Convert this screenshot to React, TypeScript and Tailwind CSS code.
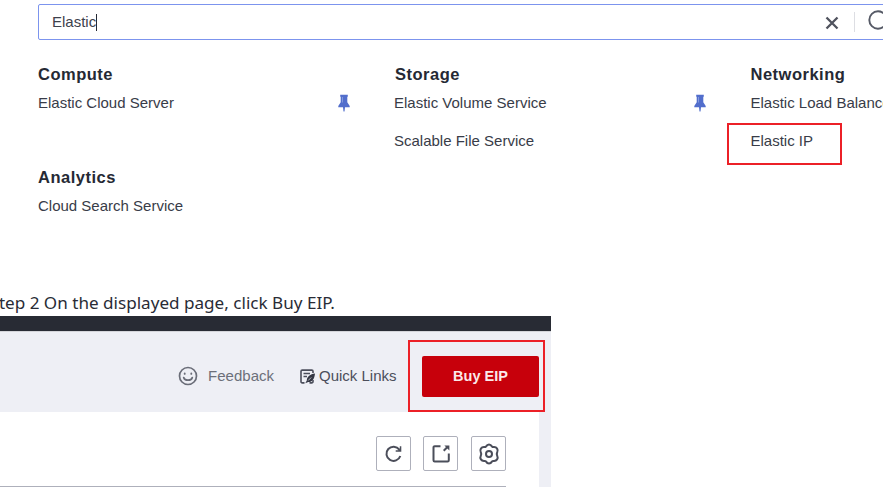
import type { ReactNode } from 'react';

const PinIcon = () => (
  <svg width="12" height="18" viewBox="0 0 12 18" fill="#526ecc" className="shrink-0">
    <path d="M2.200 .8h7.600v2H9.300v5.500L11.700 12v1.300H7L6.500 17.500h-1L5 13.300H.3V12l2.400-3.700V2.800h-.5z" />
    <path d="M4.500 3v5.500" stroke="#91a4e0" strokeWidth=".8" />
  </svg>
);

const SmileIcon = () => (
  <svg width="20" height="20" viewBox="0 0 20 20" fill="none" stroke="#6a6d78" strokeWidth="1.700" strokeLinecap="round">
    <circle cx="10" cy="10" r="8.500" />
    <path d="M6.700 7.300v.6M13.300 7.300v.6" strokeWidth="1.800" />
    <path d="M5.700 11.500c.8 3.600 7.800 3.600 8.600 0" />
  </svg>
);

const QuickIcon = () => (
  <svg width="15" height="15" viewBox="0 0 15 15" fill="none" stroke="#4b4e5b" strokeWidth="1.600">
    <path d="M13 4V2.300a1.200 1.200 0 0 0-1.200-1.200H2.200A1.200 1.200 0 0 0 1 2.300v10.400a1.200 1.200 0 0 0 1.200 1.200H4.500" />
    <path d="M3.500 4.500h6.500M3.500 7.500h3.500" />
    <path d="M15 4.500c-4.800.8-8 3-8.200 6.900L5.300 14.300l2.900-1.200c4.200.1 6.300-3.600 6.800-8.600z" fill="#343744" stroke="none" />
    <path d="M8.200 11.500l3-3" stroke="#eeeff5" strokeWidth=".7" />
    <path d="M9.500 13.900h2.300a1.200 1.200 0 0 0 1.200-1.200V11" />
  </svg>
);

const RefreshIcon = () => (
  <svg width="20" height="20" viewBox="0 0 20 20" fill="none" stroke="#4b4e5a" strokeWidth="2">
    <path d="M15.300 5.600A7.100 7.100 0 1 0 16.300 12" />
    <path d="M17.300 2.200v5.600h-5.600v-1.500h2.600l1.500-1.700V2.200z" fill="#4b4e5a" stroke="none" />
  </svg>
);

const ExportIcon = () => (
  <svg width="20" height="20" viewBox="0 0 20 20" fill="none" stroke="#4b4e5a" strokeWidth="2">
    <path d="M9.500 2.200H3.700a1.200 1.200 0 0 0-1.200 1.200v12.800a1.200 1.200 0 0 0 1.200 1.200h12.900a1.200 1.200 0 0 0 1.200-1.200V9.500" />
    <path d="M12.700 6.800l3.500-3.500" />
    <path d="M13.400 1.400h5v5z" fill="#4b4e5a" stroke="none" />
  </svg>
);

const GearIcon = () => (
  <svg width="22" height="22" viewBox="0 0 22 22" fill="none" stroke="#4b4e5a" strokeWidth="2" strokeLinejoin="round">
    <path d="M7.900 3.600Q9.200 1.500 11 1.500T14.100 3.600Q14.600 4.200 15.600 4.100Q18 3.900 19.100 5.600T19.200 9.300Q18.300 11 19.200 12.700Q20.200 14.700 19.100 16.400T15.600 17.900Q14.600 17.800 14.100 18.400Q12.800 20.500 11 20.500T7.900 18.400Q7.400 17.800 6.400 17.900Q4 18.100 2.900 16.400T2.800 12.700Q3.700 11 2.800 9.300Q1.800 7.300 2.900 5.600T6.400 4.100Q7.400 4.200 7.900 3.600z" />
    <circle cx="11" cy="11" r="3" />
  </svg>
);

const Heading = ({ children }: { children: ReactNode }) => (
  <h2 className="h-5 text-[16.500px] leading-[18px] font-bold tracking-[0.500px] text-[#252934]">{children}</h2>
);

const Service = ({ children, pinned = false }: { children: ReactNode; pinned?: boolean }) => (
  <div className="flex h-[18px] items-center justify-between text-[15px] leading-[18px] text-[#383c48]">
    <span>{children}</span>
    {pinned && <PinIcon />}
  </div>
);

const IconButton = ({ children }: { children: ReactNode }) => (
  <button className="flex h-[35px] w-[35px] items-center justify-center rounded-[2px] border border-[#aeb0bb] bg-white">
    {children}
  </button>
);

export default function App() {
  return (
    <div className="flex h-[487px] w-[883px] flex-col overflow-hidden bg-white font-['Liberation_Sans',Arial,sans-serif] whitespace-nowrap">
      <section className="h-[292px] shrink-0 pt-1 pl-[38px]">
        <div className="flex h-[36px] w-[900px] items-center rounded-[2px] border-[1.500px] border-[#7c94ee] pl-[13px] text-[15px] text-[#3d414c]">
          <span>Elastic</span>
          <span className="h-[17px] w-px bg-[#252934]" />
          <svg width="14" height="14" viewBox="0 0 14 14" className="mt-[2px] ml-[728px] shrink-0" fill="none" stroke="#50535e" strokeWidth="2.300">
            <path d="M1.500 1.500l11 11M12.500 1.500l-11 11" />
          </svg>
          <span className="ml-[15px] h-5 w-px shrink-0 bg-[#dddee3]" />
          <svg width="24" height="24" viewBox="0 0 24 24" className="ml-[13px] shrink-0" fill="none" stroke="#565a66" strokeWidth="1.900">
            <circle cx="10" cy="10" r="8.700" />
            <path d="M16.500 16.500l5 5" />
          </svg>
        </div>
        <div className="mt-[25px] flex">
          <div className="w-[356px] shrink-0">
            <div className="w-[312px]">
              <Heading>Compute</Heading>
              <div className="mt-[9px]"><Service pinned>Elastic Cloud Server</Service></div>
            </div>
            <div className="mt-[56px]">
              <Heading>Analytics</Heading>
              <div className="mt-[9px]"><Service>Cloud Search Service</Service></div>
            </div>
          </div>
          <div className="w-[356px] shrink-0">
            <div className="w-[312px]">
              <div className="pl-px"><Heading>Storage</Heading></div>
              <div className="mt-[9px]"><Service pinned>Elastic Volume Service</Service></div>
              <div className="mt-5"><Service>Scalable File Service</Service></div>
            </div>
          </div>
          <div className="shrink-0 pl-[0.500px]">
            <Heading>Networking</Heading>
            <div className="mt-[9px]"><Service>Elastic Load Balance</Service></div>
            <div className="relative mt-5">
              <Service>Elastic IP</Service>
              <span className="absolute -top-[9px] -left-[24px] h-[42px] w-[115px] border-2 border-[#ec2027]" />
            </div>
          </div>
        </div>
      </section>

      <p className="-ml-[10.500px] h-6 shrink-0 font-['Noto_Sans',sans-serif] text-[17.100px] leading-[22px] text-[#292c36]">
        Step 2 On the displayed page, click Buy EIP.
      </p>

      <section className="flex h-[171px] w-[551px] shrink-0 flex-col bg-[#eeeff5]">
        <div className="h-[15px] shrink-0 bg-[#282b34]" />
        <header className="flex h-[81px] shrink-0 items-center justify-end border-t border-[#d4d5da] pr-3 text-[15px]">
          <div className="mt-2 flex items-center gap-[10px] text-[#6c6f7a]">
            <SmileIcon />
            <span>Feedback</span>
          </div>
          <div className="mt-2 ml-[26px] flex items-center gap-1 text-[#4b4e5b]">
            <QuickIcon />
            <span>Quick Links</span>
          </div>
          <div className="relative mt-2 ml-[25.500px]">
            <button className="h-[41px] w-[117px] rounded-[2px] bg-[#c7000b] pt-px text-[14.500px] font-bold text-[#fbe9ea]">Buy EIP</button>
            <span className="absolute -top-4 -left-[14px] z-10 h-[72px] w-[137px] border-2 border-[#ec2027]" />
          </div>
        </header>
        <div className="flex grow flex-col border-r-[12px] border-[#eeeff5] bg-white pt-6 pr-[33px]">
          <div className="flex justify-end">
            <IconButton><RefreshIcon /></IconButton>
            <div className="mr-[13px] ml-3"><IconButton><ExportIcon /></IconButton></div>
            <IconButton><GearIcon /></IconButton>
          </div>
          <div className="mt-[15px] h-px shrink-0 bg-[#aeb0bb]" />
        </div>
      </section>
    </div>
  );
}
